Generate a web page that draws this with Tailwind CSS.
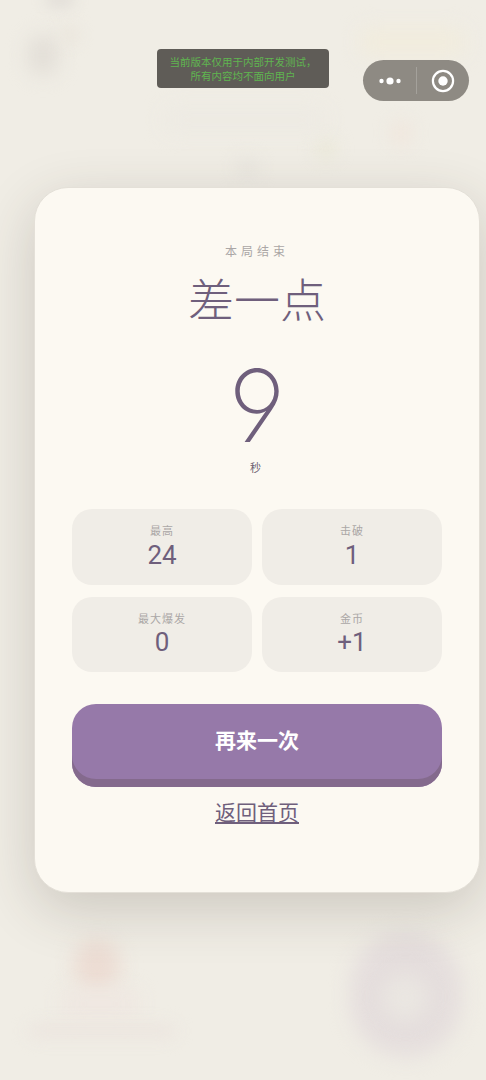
<!doctype html>
<html lang="zh">
<head>
<meta charset="utf-8">
<script src="https://cdn.jsdelivr.net/npm/@tailwindcss/browser@4"></script>
</head>
<body class="m-0">
<div class="relative w-[486px] h-[1080px] overflow-hidden bg-[#f0ede5] font-['Inter','Noto_Sans_CJK_SC',sans-serif]">
  <!-- blurred game behind the modal -->
  <div class="absolute left-[28px] top-[35px] w-[30px] h-[40px] rounded-full bg-[#e2ded7] blur-[10px]"></div>
  <div class="absolute left-[45px] top-[-8px] w-[30px] h-[16px] rounded-full bg-[#e2ded8] blur-[7px]"></div>
  <div class="absolute left-[60px] top-[25px] w-[20px] h-[20px] rounded-full bg-[#ebe6dd] blur-[7px]"></div>
  <div class="absolute left-[360px] top-[28px] w-[105px] h-[28px] rounded-lg bg-[#f1ecdd] blur-[10px]"></div>
  <div class="absolute left-[390px] top-[120px] w-[22px] h-[26px] rounded-full bg-[#f0e7de] blur-[8px]"></div>
  <div class="absolute left-[315px] top-[138px] w-[22px] h-[22px] rounded-full bg-[#ebe9da] blur-[8px]"></div>
  <div class="absolute left-[165px] top-[108px] w-[160px] h-[24px] rounded-lg bg-[#edeae3] blur-[10px]"></div>
  <div class="absolute left-[235px] top-[155px] w-[25px] h-[25px] rounded-full bg-[#eae7e0] blur-[8px]"></div>
  <div class="absolute left-[74px] top-[940px] w-[46px] h-[52px] rounded-full bg-[#ecdcd3] blur-[10px]"></div>
  <div class="absolute left-[62px] top-[990px] w-[76px] h-[28px] rounded-lg bg-[#efe7e1] blur-[10px]"></div>
  <div class="absolute left-[28px] top-[1024px] w-[148px] h-[14px] rounded-lg bg-[#ece5df] blur-[8px]"></div>
  <div class="absolute left-[350px] top-[932px] w-[112px] h-[125px] rounded-full bg-[#e5dedd] blur-[10px]"></div>
  <div class="absolute left-[382px] top-[975px] w-[46px] h-[46px] rounded-full bg-[#eae6e1] blur-[10px]"></div>

  <!-- dev-version toast -->
  <div class="absolute left-[157px] top-[49px] w-[172px] h-[39px] rounded-[4px] bg-[#5f5c57] flex flex-col items-center justify-center text-[#5fb550] text-[10.5px] leading-[14px] font-['Noto_Sans_CJK_SC',sans-serif]">
    <p>当前版本仅用于内部开发测试，</p>
    <p>所有内容均不面向用户</p>
  </div>

  <!-- capsule -->
  <div class="absolute left-[363px] top-[60px] w-[106px] h-[41px] rounded-full bg-[#8e8a83] flex items-center">
    <div class="w-[53px] flex items-center justify-center">
      <svg width="26" height="10" viewBox="0 0 26 10" fill="#fff"><circle cx="4.5" cy="5" r="2.2"/><circle cx="13" cy="5" r="3.6"/><circle cx="21.5" cy="5" r="2.2"/></svg>
    </div>
    <div class="w-px h-[27px] bg-white/20"></div>
    <div class="flex-1 flex items-center justify-center">
      <svg width="24" height="24" viewBox="0 0 24 24"><circle cx="12" cy="12" r="10.1" fill="none" stroke="#fff" stroke-width="2.2"/><circle cx="12" cy="12" r="4.7" fill="#fff"/></svg>
    </div>
  </div>

  <!-- result card -->
  <div class="absolute left-[34px] top-[187px] w-[446px] h-[706px] box-border rounded-[34px] border border-[#e4e0d8] bg-[#fcf9f2] shadow-[0_16px_56px_rgba(60,50,40,0.2)] px-[37px] pt-[55px] flex flex-col items-stretch">
    <p class="text-center text-[12px] leading-[16px] tracking-[4px] text-[#aba7a6] font-['Noto_Sans_CJK_SC',sans-serif]">本局结束</p>
    <h1 class="mt-[9px] text-center text-[46px] leading-[58px] font-light text-[#6f5f7c] font-['Noto_Sans_CJK_SC',sans-serif]">差一点</h1>
    <p class="mt-[27px] h-[106px] text-center text-[100px] leading-[106px] font-[170] [font-feature-settings:'cv04'] text-[#6f5f7c]">9</p>
    <p class="text-center text-[11px] leading-[16px] tracking-[3px] text-[#6b6070] font-['Noto_Sans_CJK_SC',sans-serif]">秒</p>

    <div class="mt-[34px] grid grid-cols-2 gap-x-[10px] gap-y-[12px]">
      <div class="h-[75.5px] rounded-[20px] bg-[#f0ede7] flex flex-col items-center pt-[14px]">
        <span class="text-[11px] leading-[14px] tracking-[1px] text-[#aba7a6] font-['Noto_Sans_CJK_SC',sans-serif]">最高</span>
        <span class="mt-[2px] text-[26px] leading-[32px] font-normal text-[#6f5f7c] font-['Roboto',sans-serif]">24</span>
      </div>
      <div class="h-[75.5px] rounded-[20px] bg-[#f0ede7] flex flex-col items-center pt-[14px]">
        <span class="text-[11px] leading-[14px] tracking-[1px] text-[#aba7a6] font-['Noto_Sans_CJK_SC',sans-serif]">击破</span>
        <span class="mt-[2px] text-[26px] leading-[32px] font-normal text-[#6f5f7c] font-['Roboto',sans-serif]">1</span>
      </div>
      <div class="h-[75.5px] rounded-[20px] bg-[#f0ede7] flex flex-col items-center pt-[14px]">
        <span class="text-[11px] leading-[14px] tracking-[1px] text-[#aba7a6] font-['Noto_Sans_CJK_SC',sans-serif]">最大爆发</span>
        <span class="mt-[1px] text-[26px] leading-[32px] font-normal text-[#6f5f7c] font-['Roboto',sans-serif]">0</span>
      </div>
      <div class="h-[75.5px] rounded-[20px] bg-[#f0ede7] flex flex-col items-center pt-[14px]">
        <span class="text-[11px] leading-[14px] tracking-[1px] text-[#aba7a6] font-['Noto_Sans_CJK_SC',sans-serif]">金币</span>
        <span class="mt-[1px] text-[26px] leading-[32px] font-normal text-[#6f5f7c] font-['Roboto',sans-serif]">+1</span>
      </div>
    </div>

    <button class="mt-[32px] h-[83px] pb-[12px] rounded-[24px] bg-[#9679a9] shadow-[inset_0_-8px_0_#846a8d] text-white text-[21px] font-bold font-['Noto_Sans_CJK_SC',sans-serif]">再来一次</button>
    <a class="mt-[7px] self-center text-[21px] leading-[34px] underline text-[#6f5f7c] font-['Noto_Sans_CJK_SC',sans-serif]">返回首页</a>
  </div>
</div>
</body>
</html>
